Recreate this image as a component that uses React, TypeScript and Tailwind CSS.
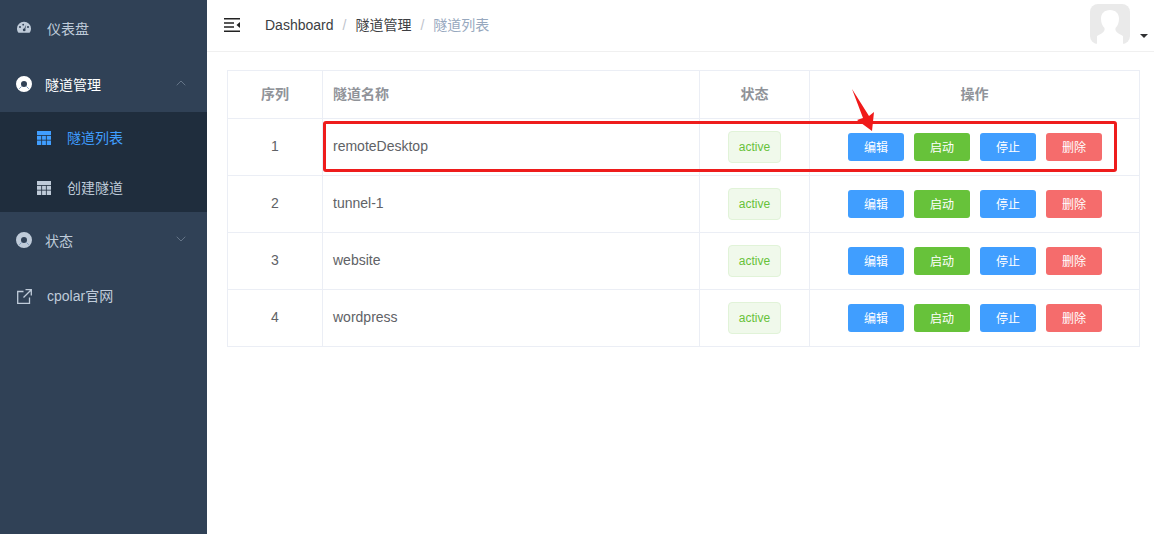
import { ChevronDown, ChevronUp } from "lucide-react";

const rows = [
  { id: 1, name: "remoteDesktop" },
  { id: 2, name: "tunnel-1" },
  { id: 3, name: "website" },
  { id: 4, name: "wordpress" },
];

function GaugeIcon() {
  return (
    <svg width="14" height="14" viewBox="0 0 14 14" className="shrink-0">
      <path
        fillRule="evenodd"
        fill="#bfcbd9"
        d="M7 0.8a7 6.6 0 0 1 7 6.6c0 1.7-.6 3.2-1.5 4.4H1.5C.6 10.6 0 9.1 0 7.4A7 6.6 0 0 1 7 .8zM3 5a1 1 0 1 0 0 2 1 1 0 0 0 0-2zm3.2-2.2a.9.9 0 1 0 0 1.8.9.9 0 0 0 0-1.8zM11 5a1 1 0 1 0 0 2 1 1 0 0 0 0-2zM9.2 3.8 7.3 7.4a1.4 1.4 0 1 0 1 .5z"
      />
    </svg>
  );
}

function RingIcon({ color }: { color: string }) {
  return (
    <svg width="16" height="16" viewBox="0 0 16 16" className="shrink-0">
      <circle cx="8" cy="8" r="5.500" fill="none" stroke={color} strokeWidth="5" />
      <path d="M3.200 12.800 5.600 10.400M12.800 12.800l-2.400-2.400" stroke="#7f9cc0" strokeWidth="1" />
    </svg>
  );
}

function GridIcon({ color }: { color: string }) {
  return (
    <svg width="14" height="14" viewBox="0 0 14 14" className="shrink-0">
      <rect width="14" height="14" fill={color} />
      <path d="M0 4.500h14M0 9.200h14M4.600 4.500V14M9.400 4.500V14" stroke="#1f2d3d" strokeWidth="0.8" />
    </svg>
  );
}

function LinkIcon() {
  return (
    <svg width="15" height="15" viewBox="0 0 15 15" fill="none" stroke="#bfcbd9" strokeWidth="1.3" className="shrink-0">
      <path d="M6.500 2.500H.7v11.800h11.800V8.500M8.500.7h5.800v5.800M14.300.7 6.500 8.500" />
    </svg>
  );
}

function Sidebar() {
  return (
    <aside className="w-[207px] shrink-0 min-h-[534px] bg-[#304156] text-[14px] text-[#bfcbd9]">
      <div className="h-[56px] flex items-center pl-[17px]">
        <GaugeIcon />
        <span className="ml-[16px] mt-[2px]">仪表盘</span>
      </div>
      <div className="h-[56px] flex items-center pl-[16px] pr-[18px] text-white">
        <RingIcon color="#ffffff" />
        <span className="ml-[13px] mt-[2px]">隧道管理</span>
        <ChevronUp size={16} strokeWidth={1} className="ml-auto mb-[3px] text-[#7f8ea0]" />
      </div>
      <div className="bg-[#1f2d3d]">
        <div className="h-[50px] flex items-center pl-[37px] pt-[2px] text-[#409eff]">
          <GridIcon color="#409eff" />
          <span className="ml-[16px]">隧道列表</span>
        </div>
        <div className="h-[50px] flex items-center pl-[37px] pt-[2px]">
          <GridIcon color="#bfcbd9" />
          <span className="ml-[16px]">创建隧道</span>
        </div>
      </div>
      <div className="h-[56px] flex items-center pl-[16px] pr-[18px]">
        <RingIcon color="#bfcbd9" />
        <span className="ml-[13px] mt-[2px]">状态</span>
        <ChevronDown size={16} strokeWidth={1} className="ml-auto mb-[3px] text-[#7f8ea0]" />
      </div>
      <div className="h-[56px] flex items-center pl-[17px]">
        <LinkIcon />
        <span className="ml-[15px]">cpolar官网</span>
      </div>
    </aside>
  );
}

function Navbar() {
  return (
    <header className="h-[52px] flex items-center border-b border-[#f0f0f0] pl-[17px] text-[14px]">
      <svg width="16" height="14" viewBox="0 0 16 14" className="mb-[2px] shrink-0">
        <path d="M0 .75h16M0 13.250h16M0 5h10M0 9h10" stroke="#222" strokeWidth="1.5" />
        <path d="M16 4v6l-3.500-3z" fill="#222" />
      </svg>
      <nav className="ml-[25px] flex items-center text-[#3c3e42]">
        <span>Dashboard</span>
        <span className="mx-[9px] text-[#c0c4cc]">/</span>
        <span>隧道管理</span>
        <span className="mx-[9px] text-[#c0c4cc]">/</span>
        <span className="text-[#97a8be]">隧道列表</span>
      </nav>
      <div className="ml-auto mr-[6px] mt-[2px] flex items-end">
        <svg width="40" height="40" viewBox="0 0 40 40" className="mb-[5px]">
          <rect width="40" height="40" rx="8" fill="#eaeaea" />
          <path
            d="M20 6c-5.500 0-9 3.500-9 8.500 0 4 1 7 3.500 9.500.5 2-.5 4-3 5.500L7 32v8h26v-8l-4.500-2.500c-2.500-1.500-3.500-3.500-3-5.500 2.500-2.500 3.500-5.500 3.500-9.500C29 9.500 25.500 6 20 6z"
            fill="#ffffff"
          />
        </svg>
        <span className="ml-[10px] mb-[11px] w-0 h-0 border-x-[4px] border-x-transparent border-t-[4px] border-t-[#303133]" />
      </div>
    </header>
  );
}

function ActionButton({ label, color }: { label: string; color: string }) {
  return (
    <button className={`w-[56px] h-[28px] pt-[2px] rounded-[3px] text-[12px] text-white ${color}`}>
      {label}
    </button>
  );
}

function TunnelTable() {
  return (
    <table className="w-[913px] table-fixed border-collapse text-[14px] text-[#606266]">
      <thead>
        <tr className="h-[48px] text-[#909399]">
          <th className="w-[95px] border border-[#ebeef5] font-bold">序列</th>
          <th className="w-[377px] border border-[#ebeef5] pl-[10px] text-left font-bold">隧道名称</th>
          <th className="w-[110px] border border-[#ebeef5] font-bold">状态</th>
          <th className="border border-[#ebeef5] font-bold">操作</th>
        </tr>
      </thead>
      <tbody>
        {rows.map((row) => (
          <tr key={row.id} className="h-[57px]">
            <td className="border border-[#ebeef5] pb-[2px] text-center">{row.id}</td>
            <td className="border border-[#ebeef5] pb-[2px] pl-[10px]">{row.name}</td>
            <td className="border border-[#ebeef5] text-center">
              <span className="inline-flex items-center justify-center w-[53px] h-[32px] rounded-[4px] border border-[#e1f3d8] bg-[#f0f9eb] text-[12px] text-[#67c23a]">
                active
              </span>
            </td>
            <td className="border border-[#ebeef5]">
              <div className="flex justify-center gap-[10px] mb-[1px] ml-[1px]">
                <ActionButton label="编辑" color="bg-[#409eff]" />
                <ActionButton label="启动" color="bg-[#67c23a]" />
                <ActionButton label="停止" color="bg-[#409eff]" />
                <ActionButton label="删除" color="bg-[#f56c6c]" />
              </div>
            </td>
          </tr>
        ))}
      </tbody>
    </table>
  );
}

export default function App() {
  return (
    <div
      className="flex w-[1154px] h-[534px] overflow-hidden bg-white"
      style={{ fontFamily: '"Liberation Sans", "Noto Sans CJK SC", sans-serif' }}
    >
      <Sidebar />
      <main className="flex-1 min-w-0">
        <Navbar />
        <div className="relative pl-[20px] pt-[18px]">
          <TunnelTable />
          {/* red annotation over the first row */}
          <div className="absolute left-[116px] top-[69px] w-[794px] h-[51px] rounded-[3px] border-[3px] border-[#ee1c1c]" />
          <svg width="26" height="44" viewBox="0 0 26 44" className="absolute left-[643px] top-[36px]">
            <path d="M2 1 L19 28 L24 24 L22 43 L7 32 L13 30 Z" fill="#f01a1a" />
          </svg>
        </div>
      </main>
    </div>
  );
}
